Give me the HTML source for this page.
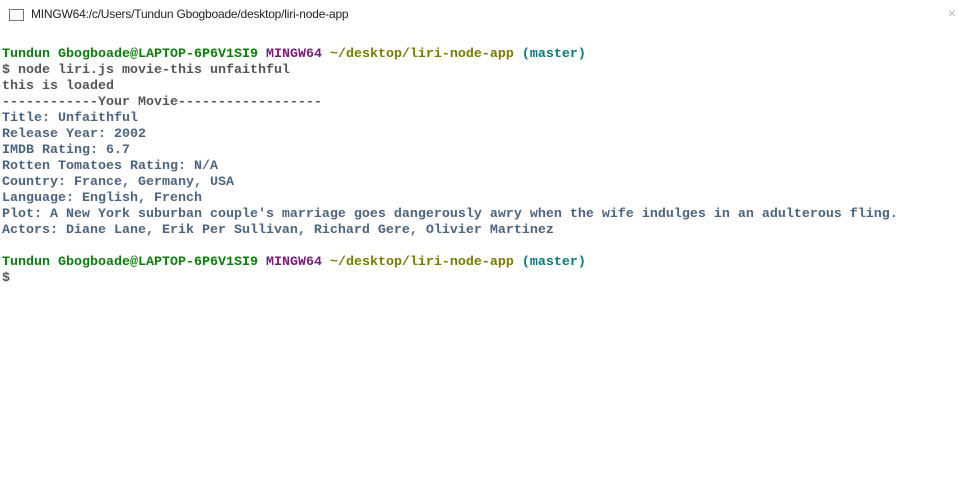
<!DOCTYPE html>
<html><head><meta charset="utf-8"><style>
html,body{margin:0;padding:0;background:#fff;width:958px;height:503px;overflow:hidden;}
.tb{position:absolute;left:0;top:0;width:958px;height:30px;}
.ic{position:absolute;left:9px;top:9px;width:13px;height:10px;border:1px solid #777;}
.tt{position:absolute;left:31px;top:7px;font:12px "Liberation Sans",sans-serif;color:#222;letter-spacing:-0.2px;}
.x{position:absolute;left:948px;top:5px;font:14px "Liberation Sans",sans-serif;color:#bbb;}
pre{position:absolute;left:2px;top:47px;margin:0;font:bold 13.33px/16px "Liberation Mono",monospace;color:#555;}
.g{color:#0a7d0a}.p{color:#7a1a7a}.o{color:#7a7a00}.t{color:#0a7a7a}.b{color:#4a6480}
</style></head><body>
<div class="tb"><div class="ic"></div><div class="tt">MINGW64:/c/Users/Tundun Gbogboade/desktop/liri-node-app</div><div class="x">×</div></div>
<pre><span class="g">Tundun Gbogboade@LAPTOP-6P6V1SI9</span> <span class="p">MINGW64</span> <span class="o">~/desktop/liri-node-app</span> <span class="t">(master)</span>
$ node liri.js movie-this unfaithful
this is loaded
------------Your Movie------------------
<span class="b">Title: Unfaithful
Release Year: 2002
IMDB Rating: 6.7
Rotten Tomatoes Rating: N/A
Country: France, Germany, USA
Language: English, French
Plot: A New York suburban couple's marriage goes dangerously awry when the wife indulges in an adulterous fling.
Actors: Diane Lane, Erik Per Sullivan, Richard Gere, Olivier Martinez</span>

<span class="g">Tundun Gbogboade@LAPTOP-6P6V1SI9</span> <span class="p">MINGW64</span> <span class="o">~/desktop/liri-node-app</span> <span class="t">(master)</span>
$
</pre>
</body></html>
